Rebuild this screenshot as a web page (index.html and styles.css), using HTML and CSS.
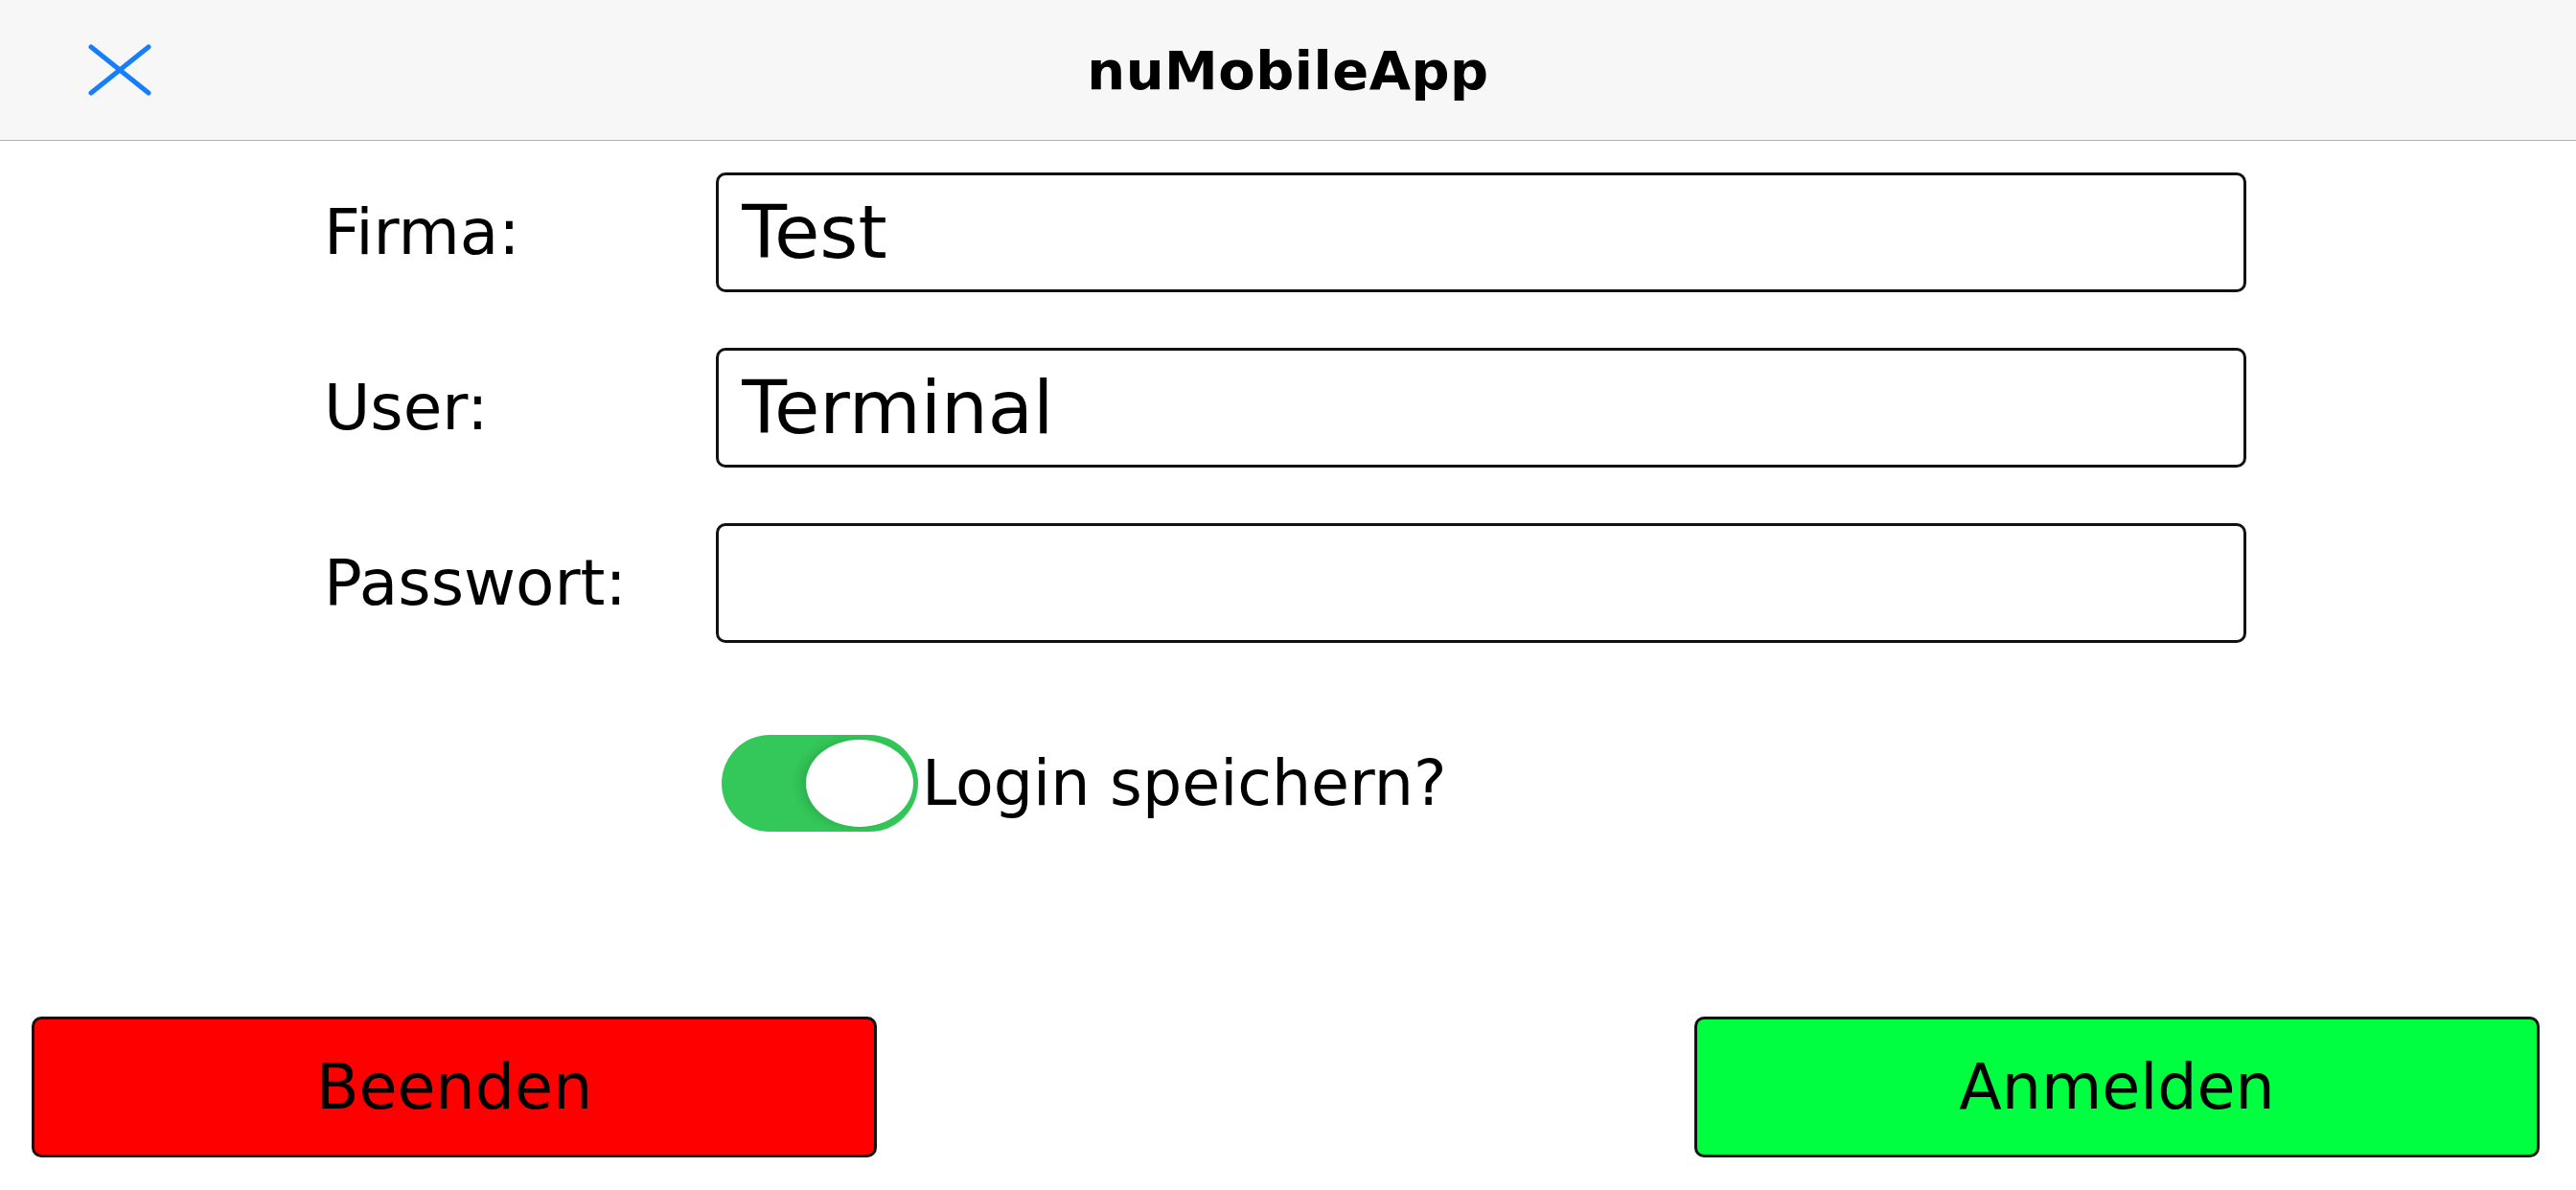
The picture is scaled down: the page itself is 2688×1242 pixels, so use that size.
FILE: index.html
```html
<!DOCTYPE html>
<html lang="de">
<head>
    <meta charset="UTF-8">
    <meta name="viewport" content="width=device-width, initial-scale=1.0">
    <title>nuMobileApp</title>
    <link rel="stylesheet" href="styles.css">
</head>
<body>

<!-- Top navigation bar -->
<header class="nav-bar">
    <button class="close-btn" type="button" aria-label="Schließen">
        <svg width="66" height="54" viewBox="0 0 66 54">
            <path d="M3 3 L63 51 M63 3 L3 51" stroke="#157efb" stroke-width="5" stroke-linecap="round" fill="none"/>
        </svg>
    </button>
    <h1 class="nav-title">nuMobileApp</h1>
    <div></div>
</header>

<!-- Login form -->
<form class="login-form" id="login-form">
    <label for="firma">Firma:</label>
    <input type="text" id="firma" value="Test">

    <label for="user">User:</label>
    <input type="text" id="user" value="Terminal">

    <label for="passwort">Passwort:</label>
    <input type="password" id="passwort">

    <div class="remember-row">
        <div class="switch on">
            <div class="switch-knob"></div>
        </div>
        <span>Login speichern?</span>
    </div>
</form>

<!-- Bottom actions -->
<footer class="actions">
    <button class="btn btn-quit" type="button">Beenden</button>
    <button class="btn btn-login" type="submit" form="login-form">Anmelden</button>
</footer>

</body>
</html>
```

FILE: styles.css
```css
body {
    font-family: "DejaVu Sans", sans-serif;
    margin: 0;
    background-color: #fff;
    color: #000;
    display: flex;
    flex-direction: column;
    height: 100vh;
}
.nav-bar {
    display: grid;
    grid-template-columns: 1fr auto 1fr;
    align-items: center;
    height: 146px;
    background-color: #f7f7f7;
    border-bottom: 1px solid #b2b2b2;
}
.close-btn {
    justify-self: start;
    margin-left: 92px;
    padding: 0;
    border: none;
    background: none;
    display: flex;
}
.nav-title {
    margin: 0;
    font-size: 56px;
    font-weight: bold;
    letter-spacing: 0.5px;
}
.login-form {
    display: grid;
    grid-template-columns: 409px 1597px;
    row-gap: 58px;
    align-items: center;
    margin-top: 33px;
    padding-left: 338px;
}
.login-form label {
    font-size: 66px;
}
.login-form input {
    box-sizing: border-box;
    height: 125px;
    width: 100%;
    padding: 0 24px;
    border: 3px solid #111;
    border-radius: 10px;
    font-family: "DejaVu Sans", sans-serif;
    font-size: 77px;
    color: #000;
    outline: none;
}
.remember-row {
    grid-column: 2;
    display: flex;
    align-items: center;
    gap: 4px;
    margin-top: 38px;
    margin-left: 6px;
    font-size: 65px;
}
.switch {
    box-sizing: border-box;
    width: 205px;
    height: 101px;
    padding: 5px 5px;
    border-radius: 51px;
    background-color: #e5e5ea;
    display: flex;
}
.switch.on {
    background-color: #34c759;
    justify-content: flex-end;
}
.switch-knob {
    width: 112px;
    height: 91px;
    border-radius: 50%;
    background-color: #fff;
    box-shadow: -6px 0 10px rgba(0, 80, 20, 0.18);
}
.actions {
    margin-top: auto;
    display: flex;
    justify-content: space-between;
    padding: 0 38px 34px 33px;
}
.btn {
    width: 882px;
    height: 147px;
    border: 3px solid #111;
    border-radius: 10px;
    font-family: "DejaVu Sans", sans-serif;
    font-size: 65px;
    color: #000;
    cursor: pointer;
}
.btn-quit {
    background-color: #ff0000;
}
.btn-login {
    background-color: #00ff41;
}
```
